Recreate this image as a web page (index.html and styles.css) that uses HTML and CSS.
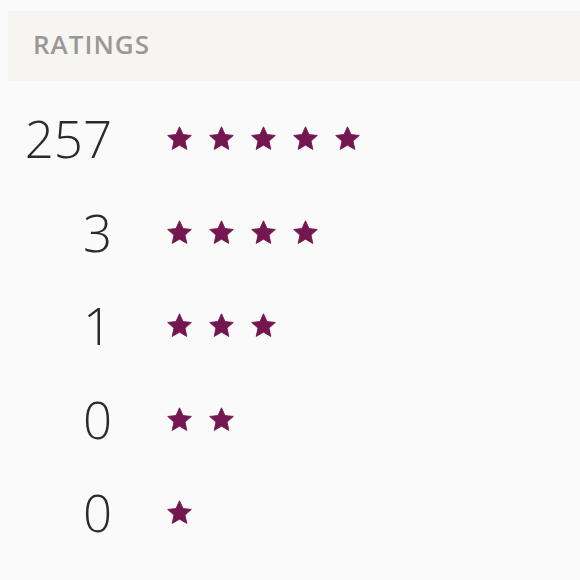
FILE: index.html
```html
<!DOCTYPE html>
<html>
<head>
<meta charset="utf-8">
<link rel="stylesheet" href="styles.css">
</head>
<body>
<svg width="0" height="0" class="defs">
  <defs>
    <symbol id="star" viewBox="0 0 24 24">
      <path d="M12 1.6l3.1 6.9 7.4.8-5.6 5 1.6 7.4L12 17.9l-6.5 3.8 1.6-7.4-5.6-5 7.4-.8z" stroke-linejoin="round"/>
    </symbol>
  </defs>
</svg>
<section class="ratings">
  <header class="ratings-head">RATINGS</header>
  <ul class="rows">
    <li class="row"><span class="count">257</span><span class="stars"><svg class="star"><use href="#star"/></svg><svg class="star"><use href="#star"/></svg><svg class="star"><use href="#star"/></svg><svg class="star"><use href="#star"/></svg><svg class="star"><use href="#star"/></svg></span></li>
    <li class="row"><span class="count">3</span><span class="stars"><svg class="star"><use href="#star"/></svg><svg class="star"><use href="#star"/></svg><svg class="star"><use href="#star"/></svg><svg class="star"><use href="#star"/></svg></span></li>
    <li class="row"><span class="count">1</span><span class="stars"><svg class="star"><use href="#star"/></svg><svg class="star"><use href="#star"/></svg><svg class="star"><use href="#star"/></svg></span></li>
    <li class="row"><span class="count">0</span><span class="stars"><svg class="star"><use href="#star"/></svg><svg class="star"><use href="#star"/></svg></span></li>
    <li class="row"><span class="count">0</span><span class="stars"><svg class="star"><use href="#star"/></svg></span></li>
  </ul>
</section>
</body>
</html>
```
FILE: styles.css
```css
html, body {
  margin: 0;
  padding: 0;
  background: #fafafa;
}
.defs {
  position: absolute;
  width: 0;
  height: 0;
}
.ratings {
  padding: 11px 0 0 8px;
  font-family: "Open Sans", "Lato", sans-serif;
}
.ratings-head {
  height: 70px;
  box-sizing: border-box;
  background: #f6f5f2;
  display: flex;
  align-items: center;
  padding: 0 0 4px 25px;
  font-size: 26px;
  font-weight: 600;
  letter-spacing: 1px;
  color: #9b9894;
}
.rows {
  list-style: none;
  margin: 0;
  padding: 11px 0 0 0;
}
.row {
  display: flex;
  align-items: center;
  height: 93.5px;
}
.count {
  width: 104px;
  text-align: right;
  font-size: 51px;
  font-weight: 300;
  color: #2a2a2a;
  line-height: 1;
}
.stars {
  display: flex;
  gap: 15px;
  margin-left: 54px;
}
.star {
  width: 27px;
  height: 27px;
  fill: #741650;
  stroke: #741650;
  stroke-width: 0.8;
}
```
